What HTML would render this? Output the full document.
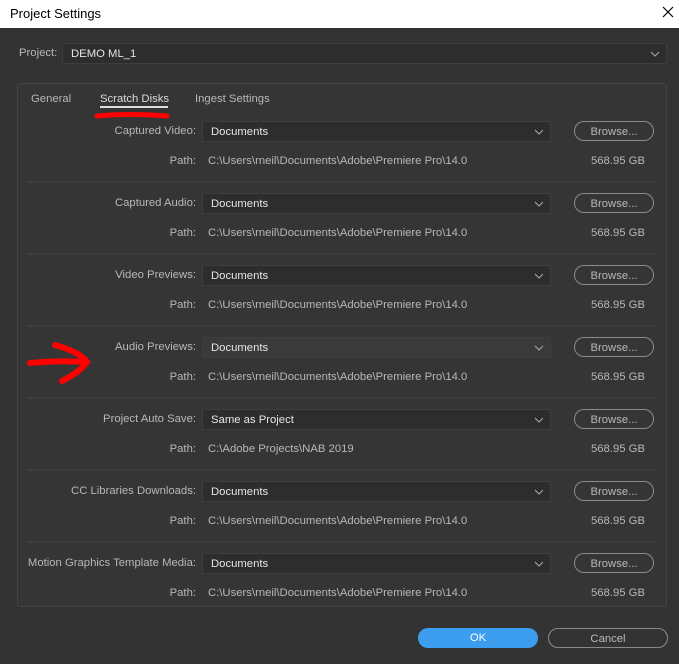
<!DOCTYPE html>
<html><head><style>
*{margin:0;padding:0;box-sizing:border-box}
body{width:679px;height:664px;background:#333;font-family:"Liberation Sans",sans-serif;font-size:11.3px;color:#b8b8b8;position:relative;overflow:hidden}
.a{position:absolute;white-space:nowrap}
.title{left:0;top:0;width:679px;height:28px;background:#fff;color:#000;font-size:13px;padding:6px 0 0 10px}
.dd{position:absolute;background:#2d2d2d;border:1px solid #3e3e3e;border-radius:2px;color:#e6e6e6;padding:4px 0 0 8px;height:21px}
.dd svg{position:absolute;right:6px;top:7px}
.br{position:absolute;border:1px solid #8a8a8a;border-radius:10px;width:80px;height:20px;text-align:center;color:#b8b8b8;padding-top:4px}
.lab{text-align:right;width:190px;left:6px}
.sep{position:absolute;left:27px;width:627px;height:2px;background:#3d3d3d}
</style></head><body>
<div class="a title">Project Settings</div>
<svg class="a" style="left:662px;top:6px" width="12" height="12"><path d="M1 1L11 11M11 1L1 11" stroke="#000" stroke-width="1.2"/></svg>
<div class="a" style="left:19px;top:47px">Project:</div>
<div class="dd" style="left:62px;top:43px;width:605px">DEMO ML_1<svg width="10" height="6"><path d="M1 1L5 5L9 1" stroke="#aaa" fill="none"/></svg></div>
<div class="a" style="left:17px;top:83px;width:650px;height:524px;border:1px solid #444;border-radius:3px;background:#353535"></div>
<div class="a" style="left:31px;top:93px">General</div>
<div class="a" style="left:100px;top:93px;color:#dcdcdc">Scratch Disks</div>
<div class="a" style="left:100px;top:106px;width:68px;height:2px;background:#ddd"></div>
<div class="a" style="left:195px;top:93px">Ingest Settings</div>
<svg class="a" style="left:0;top:0" width="679" height="664"><path d="M97 116Q130 113 167 116" stroke="#f00" stroke-width="5" fill="none" stroke-linecap="round"/><path d="M30 363Q60 360 87 362M55 345Q80 352 87 362Q80 372 62 381" stroke="#f00" stroke-width="6" fill="none" stroke-linecap="round"/></svg>
<div id="rows"></div>
<script>
var r=[["Captured Video:","Documents","C:\\Users\\rneil\\Documents\\Adobe\\Premiere Pro\\14.0"],["Captured Audio:","Documents","C:\\Users\\rneil\\Documents\\Adobe\\Premiere Pro\\14.0"],["Video Previews:","Documents","C:\\Users\\rneil\\Documents\\Adobe\\Premiere Pro\\14.0"],["Audio Previews:","Documents","C:\\Users\\rneil\\Documents\\Adobe\\Premiere Pro\\14.0"],["Project Auto Save:","Same as Project","C:\\Adobe Projects\\NAB 2019"],["CC Libraries Downloads:","Documents","C:\\Users\\rneil\\Documents\\Adobe\\Premiere Pro\\14.0"],["Motion Graphics Template Media:","Documents","C:\\Users\\rneil\\Documents\\Adobe\\Premiere Pro\\14.0"]];
var h="";r.forEach(function(x,i){var y=121+72*i;
h+='<div class="a lab" style="top:'+(y+4)+'px">'+x[0]+'</div>';
h+='<div class="dd" style="left:202px;top:'+y+'px;width:349px'+(i==3?';background:#3a3a3a':'')+'">'+x[1]+'<svg width="10" height="6"><path d="M1 1L5 5L9 1" stroke="#aaa" fill="none"/></svg></div>';
h+='<div class="br" style="left:574px;top:'+y+'px">Browse...</div>';
h+='<div class="a lab" style="top:'+(y+34)+'px">Path:</div>';
h+='<div class="a" style="left:208px;top:'+(y+34)+'px">'+x[2]+'</div>';
h+='<div class="a" style="left:560px;width:85px;text-align:right;top:'+(y+34)+'px">568.95 GB</div>';
if(i<6)h+='<div class="sep" style="top:'+(y+60)+'px"></div>';});
document.getElementById("rows").innerHTML=h;
</script>
<div class="a" style="left:418px;top:628px;width:120px;height:20px;border-radius:10px;background:#3d9ef0;color:#fff;text-align:center;padding-top:4px">OK</div>
<div class="a" style="left:548px;top:628px;width:120px;height:20px;border-radius:10px;border:1px solid #8a8a8a;text-align:center;padding-top:4px">Cancel</div>
</body></html>
